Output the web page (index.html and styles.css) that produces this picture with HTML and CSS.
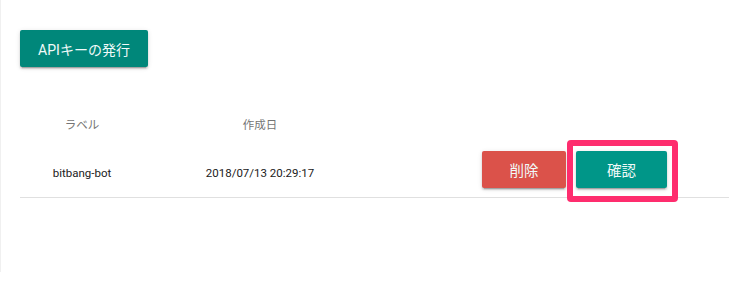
FILE: index.html
```html
<!DOCTYPE html>
<html>
<head>
    <meta charset="UTF-8">
    <meta name="viewport" content="width=device-width, initial-scale=1.0">
    <title>APIキー</title>
    <link rel="stylesheet" href="styles.css">
</head>
<body>
    <div class="page">
        <button class="btn btn-issue">APIキーの発行</button>

        <div class="key-table">
            <div class="row head">
                <div class="cell col-label">ラベル</div>
                <div class="cell col-date">作成日</div>
                <div class="cell col-actions"></div>
            </div>
            <div class="row item">
                <div class="cell col-label">bitbang-bot</div>
                <div class="cell col-date">2018/07/13 20:29:17</div>
                <div class="cell col-actions">
                    <button class="btn btn-delete">削除</button>
                    <button class="btn btn-confirm highlight">確認</button>
                </div>
            </div>
        </div>
    </div>
</body>
</html>
```

FILE: styles.css
```css
body {
    margin: 0;
    background: #fff;
    font-family: Roboto, "Noto Sans CJK JP", sans-serif;
    color: #212121;
}
.page {
    height: 242px;
    padding: 30px 21px 0 19px;
    border-left: 1px solid #f0f0f0;
}
.btn {
    border: none;
    border-radius: 2px;
    color: #f1faf9;
    font-family: Roboto, "Noto Sans CJK JP", sans-serif;
    font-size: 14px;
    height: 37px;
    padding: 0;
    cursor: pointer;
    box-shadow: 0 2px 2px rgba(0,0,0,0.14), 0 3px 1px -2px rgba(0,0,0,0.2), 0 1px 5px rgba(0,0,0,0.12);
}
.btn-issue {
    display: block;
    width: 128px;
    background: #00877a;
}
.btn-delete {
    width: 84px;
    font-size: 14.5px;
    background: #db524a;
}
.btn-confirm {
    width: 91px;
    margin-left: 10px;
    font-size: 14.5px;
    background: #009688;
}
.highlight {
    position: relative;
}
.highlight::after {
    content: "";
    position: absolute;
    top: -11px;
    left: -9px;
    right: -11px;
    bottom: -14px;
    border: 6px solid #fe2d6e;
    border-radius: 4px;
}
.key-table {
    margin-top: 33px;
}
.row {
    display: grid;
    grid-template-columns: 124px 232px 1fr;
    align-items: center;
}
.head {
    height: 48px;
    font-size: 11.5px;
    color: #757575;
}
.item {
    height: 49px;
    font-size: 11.5px;
    border-bottom: 1px solid #e0e0e0;
}
.cell {
    text-align: center;
}
.col-actions {
    display: flex;
    justify-content: flex-end;
    padding-right: 62px;
    margin-bottom: 6px;
}
```
